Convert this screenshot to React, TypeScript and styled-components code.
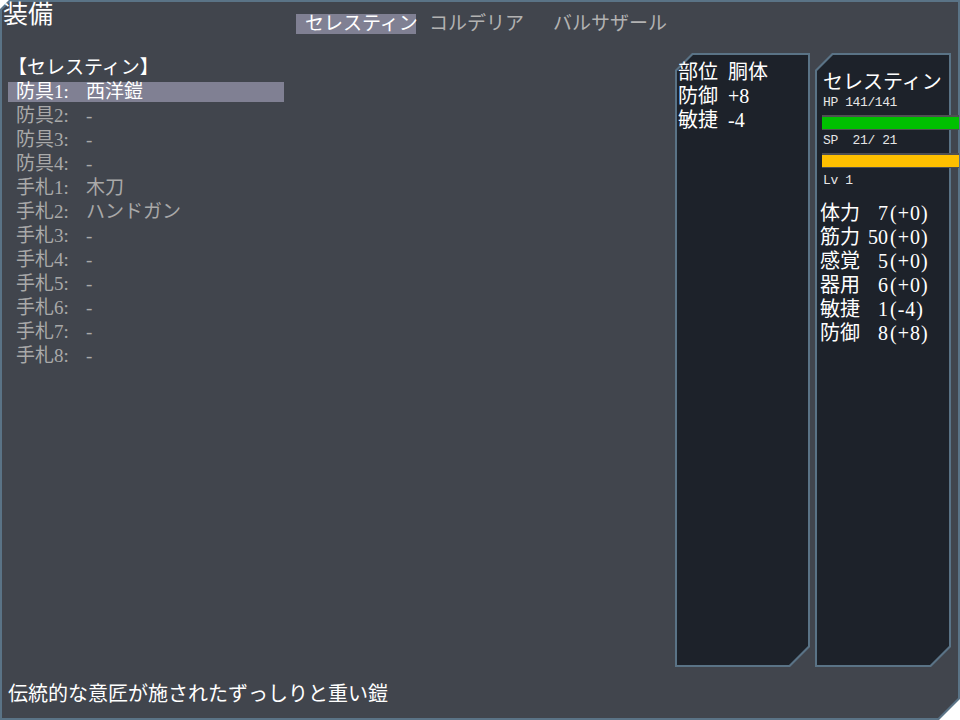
import React from "react";
import styled, { createGlobalStyle, css } from "styled-components";

const GlobalStyle = createGlobalStyle`
  html, body { margin: 0; padding: 0; background: #ffffff; }
  body {
    font-family: "Liberation Serif", "Noto Sans CJK JP", serif;
    -webkit-font-smoothing: none;
  }
  * { box-sizing: border-box; }
`;

const BORDER = "#5a7386";

const cutFrame = (bg: string, tl: number, br: number) => css`
  &::before,
  &::after {
    content: "";
    position: absolute;
    z-index: 0;
    pointer-events: none;
  }
  &::before {
    inset: 0;
    background: ${BORDER};
    clip-path: polygon(
      ${tl}px 0,
      100% 0,
      100% calc(100% - ${br}px),
      calc(100% - ${br}px) 100%,
      0 100%,
      0 ${tl}px
    );
  }
  &::after {
    inset: 2px;
    background: ${bg};
    clip-path: polygon(
      ${tl - 1}px 0,
      100% 0,
      100% calc(100% - ${br - 1}px),
      calc(100% - ${br - 1}px) 100%,
      0 100%,
      0 ${tl - 1}px
    );
  }
  & > * {
    position: relative;
    z-index: 1;
  }
`;

const Window = styled.div`
  position: relative;
  width: 960px;
  height: 720px;
  display: flex;
  flex-direction: column;
  color: #ffffff;
  ${cutFrame("#41454d", 9, 21)}
`;

const Header = styled.header`
  height: 53px;
  display: grid;
  grid-template-columns: 1fr auto 1fr;
  align-items: start;
`;

const Title = styled.h1`
  margin: 0;
  padding: 1px 0 0 3px;
  font-size: 25px;
  line-height: 28px;
  font-weight: normal;
  color: #ffffff;
`;

const Tabs = styled.nav`
  display: flex;
  gap: 4px;
  margin-top: 14px;
`;

const Tab = styled.div<{ $active?: boolean }>`
  width: 120px;
  height: 20px;
  padding-left: 9px;
  font-size: 19px;
  line-height: 20px;
  white-space: nowrap;
  overflow: visible;
  background: ${(p) => (p.$active ? "#808093" : "transparent")};
  color: ${(p) => (p.$active ? "#ffffff" : "#b2b2b2")};
`;

const Main = styled.main`
  height: 614px;
  display: flex;
  gap: 5px;
  padding-right: 9px;
`;

const List = styled.section`
  flex: 1;
  padding: 3px 0 0 8px;
  font-size: 19px;
`;

const ListTitle = styled.div`
  height: 24px;
  line-height: 24px;
  color: #ffffff;
  white-space: nowrap;
`;

const Row = styled.div`
  height: 24px;
  padding: 2px 0;
  width: 276px;
`;

const RowInner = styled.div<{ $selected?: boolean }>`
  height: 20px;
  line-height: 20px;
  padding-left: 8px;
  display: grid;
  grid-template-columns: 70px auto;
  white-space: nowrap;
  background: ${(p) => (p.$selected ? "#808093" : "transparent")};
  color: ${(p) => (p.$selected ? "#ffffff" : "#a9a9a9")};
`;

const Panel = styled.aside<{ $width: number }>`
  position: relative;
  width: ${(p) => p.$width}px;
  flex: none;
  ${cutFrame("#1d222a", 17, 20)}
`;

const PartInfo = styled.div`
  padding: 7px 0 0 3px;
  font-size: 20px;
`;

const InfoRow = styled.div`
  display: grid;
  grid-template-columns: 50px auto;
  height: 24px;
  line-height: 24px;
  white-space: nowrap;
  color: #ffffff;
`;

const StatusBody = styled.div`
  padding: 18px 0 0 5px;
  display: flex;
  flex-direction: column;
`;

const CharName = styled.div`
  margin-left: 3px;
  font-size: 20px;
  line-height: 22px;
  white-space: nowrap;
  color: #ffffff;
`;

const Small = styled.div<{ $gap: number }>`
  margin: ${(p) => p.$gap}px 0 0 3px;
  font-family: "Liberation Mono", monospace;
  font-size: 13px;
  letter-spacing: -0.4px;
  line-height: 16px;
  white-space: pre;
  color: #e6e6e6;
`;

const BarTrack = styled.div`
  margin: 4px 0 0 2px;
  width: 137px;
  height: 15px;
  padding: 2px 0 1px 0;
  background: #4f5052;
`;

const BarFill = styled.div<{ $color: string }>`
  height: 100%;
  background: ${(p) => p.$color};
`;

const Stats = styled.div`
  margin-top: 12px;
  font-size: 20px;
`;

const StatRow = styled.div`
  display: grid;
  grid-template-columns: 40px 28px auto;
  height: 24px;
  line-height: 24px;
  white-space: nowrap;
  color: #ffffff;
`;

const StatValue = styled.span`
  text-align: right;
`;

const StatMod = styled.span`
  padding-left: 2px;
  letter-spacing: 1px;
`;

const Footer = styled.footer`
  padding: 17px 0 0 8px;
  font-size: 20px;
  line-height: 20px;
  color: #ffffff;
  white-space: nowrap;
`;

const rows = [
  { label: "防具1:", value: "西洋鎧", selected: true },
  { label: "防具2:", value: "-" },
  { label: "防具3:", value: "-" },
  { label: "防具4:", value: "-" },
  { label: "手札1:", value: "木刀" },
  { label: "手札2:", value: "ハンドガン" },
  { label: "手札3:", value: "-" },
  { label: "手札4:", value: "-" },
  { label: "手札5:", value: "-" },
  { label: "手札6:", value: "-" },
  { label: "手札7:", value: "-" },
  { label: "手札8:", value: "-" },
];

const stats = [
  { name: "体力", value: "7", mod: "(+0)" },
  { name: "筋力", value: "50", mod: "(+0)" },
  { name: "感覚", value: "5", mod: "(+0)" },
  { name: "器用", value: "6", mod: "(+0)" },
  { name: "敏捷", value: "1", mod: "(-4)" },
  { name: "防御", value: "8", mod: "(+8)" },
];

const hp = { cur: 141, max: 141 };
const sp = { cur: 21, max: 21 };

export default function App() {
  return (
    <>
      <GlobalStyle />
      <Window>
        <Header>
          <Title>装備</Title>
          <Tabs>
            <Tab $active>セレスティン</Tab>
            <Tab>コルデリア</Tab>
            <Tab>バルサザール</Tab>
          </Tabs>
          <div />
        </Header>
        <Main>
          <List>
            <ListTitle>【セレスティン】</ListTitle>
            {rows.map((r) => (
              <Row key={r.label}>
                <RowInner $selected={r.selected}>
                  <span>{r.label}</span>
                  <span>{r.value}</span>
                </RowInner>
              </Row>
            ))}
          </List>
          <Panel $width={135}>
            <PartInfo>
              <InfoRow>
                <span>部位</span>
                <span>胴体</span>
              </InfoRow>
              <InfoRow>
                <span>防御</span>
                <span>+8</span>
              </InfoRow>
              <InfoRow>
                <span>敏捷</span>
                <span>-4</span>
              </InfoRow>
            </PartInfo>
          </Panel>
          <Panel $width={136}>
            <StatusBody>
              <CharName>セレスティン</CharName>
              <Small $gap={2}>HP 141/141</Small>
              <BarTrack>
                <BarFill $color="#00c000" style={{ width: `${(hp.cur / hp.max) * 100}%` }} />
              </BarTrack>
              <Small $gap={3}>SP  21/ 21</Small>
              <BarTrack>
                <BarFill $color="#ffc000" style={{ width: `${(sp.cur / sp.max) * 100}%` }} />
              </BarTrack>
              <Small $gap={5}>Lv 1</Small>
              <Stats>
                {stats.map((s) => (
                  <StatRow key={s.name}>
                    <span>{s.name}</span>
                    <StatValue>{s.value}</StatValue>
                    <StatMod>{s.mod}</StatMod>
                  </StatRow>
                ))}
              </Stats>
            </StatusBody>
          </Panel>
        </Main>
        <Footer>伝統的な意匠が施されたずっしりと重い鎧</Footer>
      </Window>
    </>
  );
}
